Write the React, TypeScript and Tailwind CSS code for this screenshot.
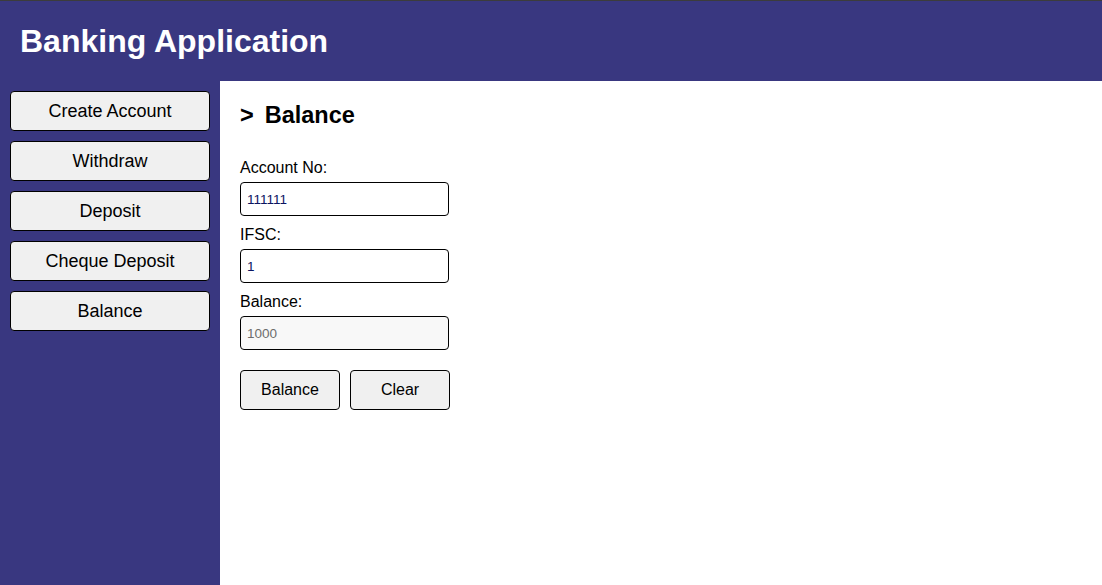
import React, { useState } from 'react';

const menu = ['Create Account', 'Withdraw', 'Deposit', 'Cheque Deposit', 'Balance'];

export default function App() {
  const [accountNo, setAccountNo] = useState('111111');
  const [ifsc, setIfsc] = useState('1');

  return (
    <div className="flex h-[585px] flex-col font-['Liberation_Sans',Arial,sans-serif] text-black">
      <header className="flex h-[81px] shrink-0 items-center border-t border-[#3c3c3c] bg-[#393780] px-5">
        <h1 className="text-[32px] font-bold text-white">Banking Application</h1>
      </header>

      <div className="flex flex-1">
        <nav className="flex w-[220px] shrink-0 flex-col gap-[10px] bg-[#393780] p-[10px]">
          {menu.map((item) => (
            <button
              key={item}
              className="h-10 rounded-[4px] border border-black bg-[#f0f0f0] text-[18px] hover:bg-[#e5e5e5]"
            >
              {item}
            </button>
          ))}
        </nav>

        <main className="flex-1 bg-white px-5 pt-[21px]">
          <h2 className="flex gap-[11px] text-[23.5px] leading-[26px] font-bold">
            <span>&gt;</span>
            <span>Balance</span>
          </h2>

          <div className="mt-[31px] flex w-[209px] flex-col">
            <label className="text-[16px] leading-[18px]">Account No:</label>
            <input
              value={accountNo}
              onChange={(e) => setAccountNo(e.target.value)}
              className="mt-[5px] h-[34px] rounded-[4px] border border-black px-[6px] text-[13.5px] text-[#0b1461] outline-none"
            />
            <label className="mt-[10px] text-[16px] leading-[18px]">IFSC:</label>
            <input
              value={ifsc}
              onChange={(e) => setIfsc(e.target.value)}
              className="mt-[5px] h-[34px] rounded-[4px] border border-black px-[6px] text-[13.5px] text-[#0b1461] outline-none"
            />
            <label className="mt-[10px] text-[16px] leading-[18px]">Balance:</label>
            <input
              value="1000"
              disabled
              className="mt-[5px] h-[34px] rounded-[4px] border border-black bg-[#f8f8f8] px-[6px] text-[13.5px] text-[#6d6d6d] outline-none"
            />
          </div>

          <div className="mt-5 flex gap-[10px]">
            <button className="h-10 w-[100px] rounded-[4px] border border-black bg-[#f0f0f0] text-[16px]">
              Balance
            </button>
            <button className="h-10 w-[100px] rounded-[4px] border border-black bg-[#f0f0f0] text-[16px]">
              Clear
            </button>
          </div>
        </main>
      </div>
    </div>
  );
}
